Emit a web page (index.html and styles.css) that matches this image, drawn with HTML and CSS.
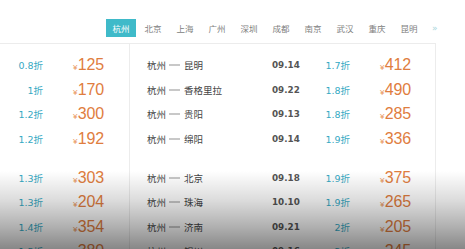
FILE: index.html
```html
<!DOCTYPE html>
<html lang="zh">
<head>
<meta charset="utf-8">
<link rel="stylesheet" href="styles.css">
</head>
<body>
<div class="page">
  <nav class="tabs">
    <span class="tab active">杭州</span>
    <span class="tab">北京</span>
    <span class="tab">上海</span>
    <span class="tab">广州</span>
    <span class="tab">深圳</span>
    <span class="tab">成都</span>
    <span class="tab">南京</span>
    <span class="tab">武汉</span>
    <span class="tab">重庆</span>
    <span class="tab">昆明</span>
    <span class="more">»</span>
  </nav>
  <div class="panel">
    <div class="col left">
      <div class="group">
        <div class="lrow"><span class="disc">0.8折</span><span class="price"><i>¥</i>125</span></div>
        <div class="lrow"><span class="disc">1折</span><span class="price"><i>¥</i>170</span></div>
        <div class="lrow"><span class="disc">1.2折</span><span class="price"><i>¥</i>300</span></div>
        <div class="lrow"><span class="disc">1.2折</span><span class="price"><i>¥</i>192</span></div>
      </div>
      <div class="group">
        <div class="lrow"><span class="disc">1.3折</span><span class="price"><i>¥</i>303</span></div>
        <div class="lrow"><span class="disc">1.3折</span><span class="price"><i>¥</i>204</span></div>
        <div class="lrow"><span class="disc">1.4折</span><span class="price"><i>¥</i>354</span></div>
        <div class="lrow"><span class="disc">1.5折</span><span class="price"><i>¥</i>380</span></div>
      </div>
    </div>
    <div class="col right">
      <div class="group">
        <div class="rrow"><span class="route">杭州<b class="dash"></b>昆明</span><span class="date">09.14</span><span class="disc">1.7折</span><span class="price"><i>¥</i>412</span></div>
        <div class="rrow"><span class="route">杭州<b class="dash"></b>香格里拉</span><span class="date">09.22</span><span class="disc">1.8折</span><span class="price"><i>¥</i>490</span></div>
        <div class="rrow"><span class="route">杭州<b class="dash"></b>贵阳</span><span class="date">09.13</span><span class="disc">1.8折</span><span class="price"><i>¥</i>285</span></div>
        <div class="rrow"><span class="route">杭州<b class="dash"></b>绵阳</span><span class="date">09.14</span><span class="disc">1.9折</span><span class="price"><i>¥</i>336</span></div>
      </div>
      <div class="group">
        <div class="rrow"><span class="route">杭州<b class="dash"></b>北京</span><span class="date">09.18</span><span class="disc">1.9折</span><span class="price"><i>¥</i>375</span></div>
        <div class="rrow"><span class="route">杭州<b class="dash"></b>珠海</span><span class="date">10.10</span><span class="disc">1.9折</span><span class="price"><i>¥</i>265</span></div>
        <div class="rrow"><span class="route">杭州<b class="dash"></b>济南</span><span class="date">09.21</span><span class="disc">2折</span><span class="price"><i>¥</i>205</span></div>
        <div class="rrow"><span class="route">杭州<b class="dash"></b>银川</span><span class="date">09.16</span><span class="disc">2折</span><span class="price"><i>¥</i>245</span></div>
      </div>
    </div>
  </div>
  <div class="shade"></div>
</div>
</body>
</html>
```

FILE: styles.css
```css
html, body {
  margin: 0;
  padding: 0;
  background: #fff;
}
.page {
  position: relative;
  width: 465px;
  height: 249px;
  overflow: hidden;
  font-family: "Noto Sans CJK SC", sans-serif;
}
.tabs {
  display: flex;
  align-items: center;
  height: 18px;
  padding: 19px 0 0 106px;
  gap: 2px;
}
.tab {
  display: flex;
  align-items: center;
  justify-content: center;
  height: 18px;
  width: 30px;
  font-size: 8.5px;
  color: #808080;
}
.tab.active {
  background: #3fbac9;
  color: #fff;
}
.more {
  margin-left: 6px;
  font-size: 9px;
  color: #a9d6dc;
  font-family: "DejaVu Sans", sans-serif;
}
.panel {
  margin-top: 6px;
  width: 436px;
  height: 220px;
  border-top: 1px solid #ececec;
  border-right: 1px solid #ececec;
  display: flex;
  box-sizing: border-box;
}
.col {
  padding-top: 9px;
  display: flex;
  flex-direction: column;
  gap: 14.5px;
}
.left {
  width: 129px;
  border-right: 1px solid #ececec;
  box-sizing: content-box;
}
.right {
  flex: 1;
}
.lrow, .rrow {
  height: 24.5px;
  display: flex;
  align-items: center;
}
.disc {
  font-family: "DejaVu Sans", "Noto Sans CJK SC", sans-serif;
  font-size: 9.5px;
  color: #35a9c3;
  text-align: right;
}
.lrow .disc {
  width: 43px;
  margin-right: 30px;
}
.price {
  font-family: "Liberation Sans", sans-serif;
  font-size: 16px;
  color: #df7d40;
  letter-spacing: -0.2px;
}
.price i {
  font-style: normal;
  font-size: 8px;
  margin-right: 0.5px;
  color: #e9955c;
}
.rrow {
  padding-left: 17px;
}
.route {
  width: 125px;
  font-size: 9.5px;
  color: #444;
  display: flex;
  align-items: center;
}
.dash {
  display: inline-block;
  width: 11px;
  height: 2px;
  background: #c8c8c8;
  margin: 0 4px 0 3px;
}
.date {
  width: 50px;
  font-family: "DejaVu Sans", sans-serif;
  font-weight: bold;
  font-size: 8.8px;
  color: #555;
}
.rrow .disc {
  width: 28px;
  margin-right: 30px;
}
.shade {
  position: absolute;
  left: 0;
  right: 0;
  bottom: 0;
  height: 78px;
  background: linear-gradient(to bottom, rgba(0,0,0,0), rgba(0,0,0,0.14) 38%, rgba(0,0,0,0.3) 70%, rgba(0,0,0,0.47));
  pointer-events: none;
}
```
